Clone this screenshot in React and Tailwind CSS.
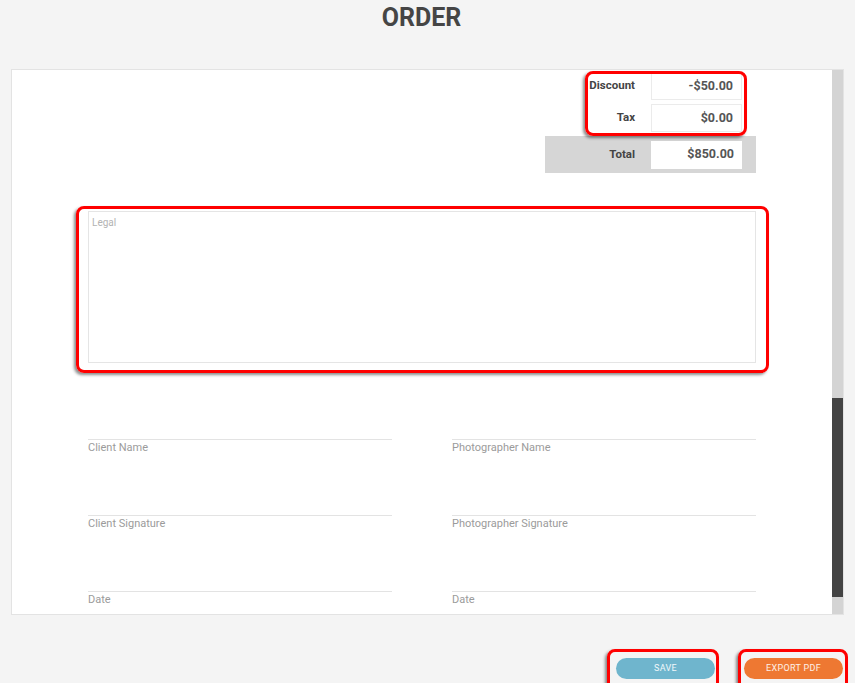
import React from "react";

const RedBox = ({ className }) => (
  <div
    className={
      "pointer-events-none absolute rounded-[8px] border-[3px] border-[#ff0000] shadow-[-2px_2px_3px_rgba(0,0,0,0.45)] " +
      className
    }
  />
);

const Field = ({ label }) => (
  <div className="flex flex-col">
    <div className="h-[61px] border-b border-[#e3e3e3]" />
    <div className="h-[15px] pt-[1px] text-[11px] leading-[14px] text-[#9b9b9b]">{label}</div>
  </div>
);

export default function App() {
  return (
    <div
      className="flex h-[683px] w-full flex-col overflow-hidden bg-[#f4f4f4]"
      style={{ fontFamily: "Roboto, 'Open Sans', Arial, sans-serif" }}
    >
      <div className="h-[69px] pr-[12px] pt-[4px] text-center text-[25px] font-bold leading-[28px] text-[#454545]">
        ORDER
      </div>

      <div className="mx-[11px] flex h-[546px] border border-[#e3e3e3] bg-white">
        <div className="flex-1 overflow-hidden px-[76px] pt-[2px]">
          <div className="ml-auto w-[211px]">
            <div className="relative flex flex-col gap-[4px]">
              <RedBox className="left-[40px] right-[9px] top-[-1px] bottom-[-4px]" />
              <div className="flex items-center justify-end pr-[14px]">
                <span className="mr-[16px] text-[11.5px] font-bold text-[#444]">Discount</span>
                <div className="flex h-[28px] w-[91px] items-center justify-end border border-[#ebebeb] bg-white pr-[8px] text-[12.5px] font-bold text-[#555]">
                  -$50.00
                </div>
              </div>
              <div className="flex items-center justify-end pr-[14px]">
                <span className="mr-[16px] text-[11.5px] font-bold text-[#444]">Tax</span>
                <div className="flex h-[28px] w-[91px] items-center justify-end border border-[#ebebeb] bg-white pr-[8px] text-[12.5px] font-bold text-[#555]">
                  $0.00
                </div>
              </div>
            </div>
            <div className="mt-[4px] flex h-[37px] items-center justify-end bg-[#d6d6d6] pr-[14px]">
              <span className="mr-[16px] text-[11.5px] font-bold text-[#444]">Total</span>
              <div className="flex h-[28px] w-[91px] items-center justify-end bg-white pr-[8px] text-[12.5px] font-bold text-[#555]">
                $850.00
              </div>
            </div>
          </div>

          <div className="relative mt-[38px] h-[152px] border border-[#e5e5e5] bg-white">
            <RedBox className="left-[-13px] right-[-14px] top-[-6px] bottom-[-11px]" />
            <div className="px-[3px] pt-[3px] text-[10px] text-[#b3b3b3]">Legal</div>
          </div>

          <div className="mt-[16px] grid grid-cols-2 gap-x-[60px]">
            <div className="flex flex-col">
              <Field label="Client Name" />
              <Field label="Client Signature" />
              <Field label="Date" />
            </div>
            <div className="flex flex-col">
              <Field label="Photographer Name" />
              <Field label="Photographer Signature" />
              <Field label="Date" />
            </div>
          </div>
        </div>
        <div className="relative w-[11px] bg-[#d4d4d4]">
          <div className="absolute left-0 right-0 top-[328px] h-[199px] bg-[#444444]" />
        </div>
      </div>

      <div className="mr-[12px] mt-[43px] flex justify-end gap-[29px]">
        <div className="relative">
          <RedBox className="left-[-9px] right-[-4px] top-[-9px] bottom-[-12px]" />
          <button className="flex h-[21px] w-[99px] items-center justify-center rounded-full bg-[#6fb5cd] text-[9px] font-normal tracking-[0.3px] text-white/90">
            SAVE
          </button>
        </div>
        <div className="relative">
          <RedBox className="left-[-6px] right-[-5px] top-[-9px] bottom-[-12px]" />
          <button className="flex h-[21px] w-[99px] items-center justify-center rounded-full bg-[#ee7832] text-[9px] font-normal tracking-[0.3px] text-white/90">
            EXPORT PDF
          </button>
        </div>
      </div>
    </div>
  );
}
